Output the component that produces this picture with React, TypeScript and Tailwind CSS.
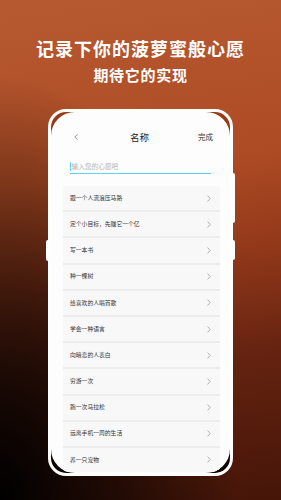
import { ChevronLeft } from "lucide-react";

const wishes = [
  "跟一个人流浪压马路",
  "定个小目标，先赚它一个亿",
  "写一本书",
  "种一棵树",
  "给喜欢的人唱首歌",
  "学会一种语言",
  "向暗恋的人表白",
  "穷游一次",
  "跑一次马拉松",
  "远离手机一周的生活",
  "养一只宠物",
];

const cjk = "font-['Noto_Sans_CJK_SC','Noto_Sans',sans-serif]";

function Chevron() {
  return (
    <svg width="4" height="7" viewBox="0 0 4 7" className="shrink-0">
      <polyline points="0.6,0.6 3.2,3.5 0.6,6.4" fill="none" stroke="#9a9a9a" strokeWidth="0.8" />
    </svg>
  );
}

export default function App() {
  return (
    <div
      className={`flex h-[500px] w-[281px] flex-col items-center overflow-hidden bg-[radial-gradient(ellipse_at_0%_100%,#000_0%,rgba(0,0,0,0.55)_30%,transparent_60%),linear-gradient(172deg,#b75a31_0%,#ad4b24_35%,#93391a_52%,#652310_72%,#451508_100%)] ${cjk}`}
    >
      {/* Heading */}
      <h1 className="mt-[36px] text-[18px] font-bold leading-[24px] tracking-[1px] text-white">
        记录下你的菠萝蜜般心愿
      </h1>
      <p className="mt-[5px] text-[15px] font-bold leading-[20px] tracking-[0.7px] text-white">期待它的实现</p>

      {/* Phone frame */}
      <div className="relative mt-[24px] h-[367px] w-[185px] shrink-0 rounded-[18px] bg-white p-[3px]">
        <span className="absolute right-[-2px] top-[64px] h-[50px] w-[2px] rounded-r bg-white" />
        <span className="absolute right-[-2px] top-[131px] h-[20px] w-[2px] rounded-r bg-white" />
        <span className="absolute left-[-2px] top-[131px] h-[21px] w-[2px] rounded-l bg-white" />

        <div className="h-full w-full overflow-hidden rounded-[15px] bg-[linear-gradient(180deg,#9a3a16_0%,#7a2a10_45%,#0a0201_100%)]">
          <div className="flex h-full w-full flex-col overflow-hidden rounded-[24px] bg-[#fdfdfd]">
            {/* Nav */}
            <div className="mt-[14px] flex h-[22px] items-center justify-between pl-[20px] pr-[17px]">
              <ChevronLeft className="h-[10px] w-[10px] text-[#444]" strokeWidth={1.4} />
              <span className="text-[9.5px] text-[#222]">名称</span>
              <span className="text-[7.5px] text-[#333]">完成</span>
            </div>

            {/* Input */}
            <div className="mx-[19px] mt-[11px] flex h-[15px] items-center border-b border-[#5fd0ee]">
              <span className="mr-[0.5px] h-[9px] w-[1px] bg-[#5fd0ee]" />
              <span className="text-[6.7px] text-[#b5b5b5]">输入您的心愿吧</span>
            </div>

            {/* List */}
            <div className="ml-[12px] mr-[10px] mt-[12px] flex flex-col gap-[2px] bg-[#ececec]">
              {wishes.map((w) => (
                <div
                  key={w}
                  className="flex h-[24.2px] shrink-0 items-center justify-between bg-[#f8f8f8] pl-[7px] pr-[9px]"
                >
                  <span className="text-[5.8px] text-[#333]">{w}</span>
                  <Chevron />
                </div>
              ))}
            </div>
          </div>
        </div>
      </div>
    </div>
  );
}
